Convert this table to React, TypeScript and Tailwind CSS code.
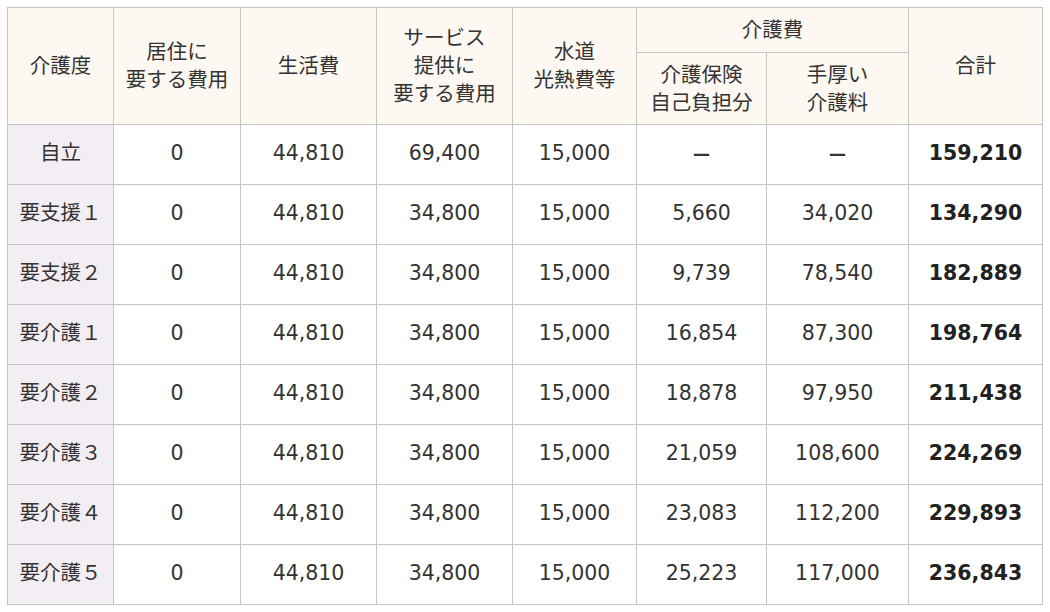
const font = {
  fontFamily: '"DejaVu Sans", "Noto Sans CJK JP", sans-serif',
};

type Row = { level: string; vals: string[]; total: string };

const rows: Row[] = [
  { level: '自立', vals: ['0', '44,810', '69,400', '15,000', '—', '—'], total: '159,210' },
  { level: '要支援１', vals: ['0', '44,810', '34,800', '15,000', '5,660', '34,020'], total: '134,290' },
  { level: '要支援２', vals: ['0', '44,810', '34,800', '15,000', '9,739', '78,540'], total: '182,889' },
  { level: '要介護１', vals: ['0', '44,810', '34,800', '15,000', '16,854', '87,300'], total: '198,764' },
  { level: '要介護２', vals: ['0', '44,810', '34,800', '15,000', '18,878', '97,950'], total: '211,438' },
  { level: '要介護３', vals: ['0', '44,810', '34,800', '15,000', '21,059', '108,600'], total: '224,269' },
  { level: '要介護４', vals: ['0', '44,810', '34,800', '15,000', '23,083', '112,200'], total: '229,893' },
  { level: '要介護５', vals: ['0', '44,810', '34,800', '15,000', '25,223', '117,000'], total: '236,843' },
];

const th = 'border border-[#c4c4c4] bg-[#fdf8f2] font-normal text-center align-middle leading-[28px]';
const td = 'border border-[#c4c4c4] text-center align-middle pb-[3px]';

export default function App() {
  return (
    <div className="bg-white w-[1050px] h-[612px] pl-[7px] pt-[7px] text-[#333] text-[20.5px]" style={font}>
      <table className="table-fixed border-collapse w-[1035px]">
        <colgroup>
          <col className="w-[106px]" />
          <col className="w-[127px]" />
          <col className="w-[136px]" />
          <col className="w-[136px]" />
          <col className="w-[124px]" />
          <col className="w-[130px]" />
          <col className="w-[142px]" />
          <col className="w-[134px]" />
        </colgroup>
        <thead>
          <tr className="h-[45px]">
            <th rowSpan={2} className={th}>介護度</th>
            <th rowSpan={2} className={th}>居住に<br />要する費用</th>
            <th rowSpan={2} className={th}>生活費</th>
            <th rowSpan={2} className={th}>サービス<br />提供に<br />要する費用</th>
            <th rowSpan={2} className={th}>水道<br />光熱費等</th>
            <th colSpan={2} className={th}>介護費</th>
            <th rowSpan={2} className={th}>合計</th>
          </tr>
          <tr className="h-[72px]">
            <th className={th}>介護保険<br />自己負担分</th>
            <th className={th}>手厚い<br />介護料</th>
          </tr>
        </thead>
        <tbody>
          {rows.map((r) => (
            <tr key={r.level} className="h-[60px]">
              <td className={`${td} bg-[#f3eef4]`}>{r.level}</td>
              {r.vals.map((v, i) => (
                <td key={i} className={td}>
                  {v === '—' ? <span className="font-bold text-[17px]">—</span> : v}
                </td>
              ))}
              <td className={`${td} font-bold text-[#222]`}>{r.total}</td>
            </tr>
          ))}
        </tbody>
      </table>
    </div>
  );
}
